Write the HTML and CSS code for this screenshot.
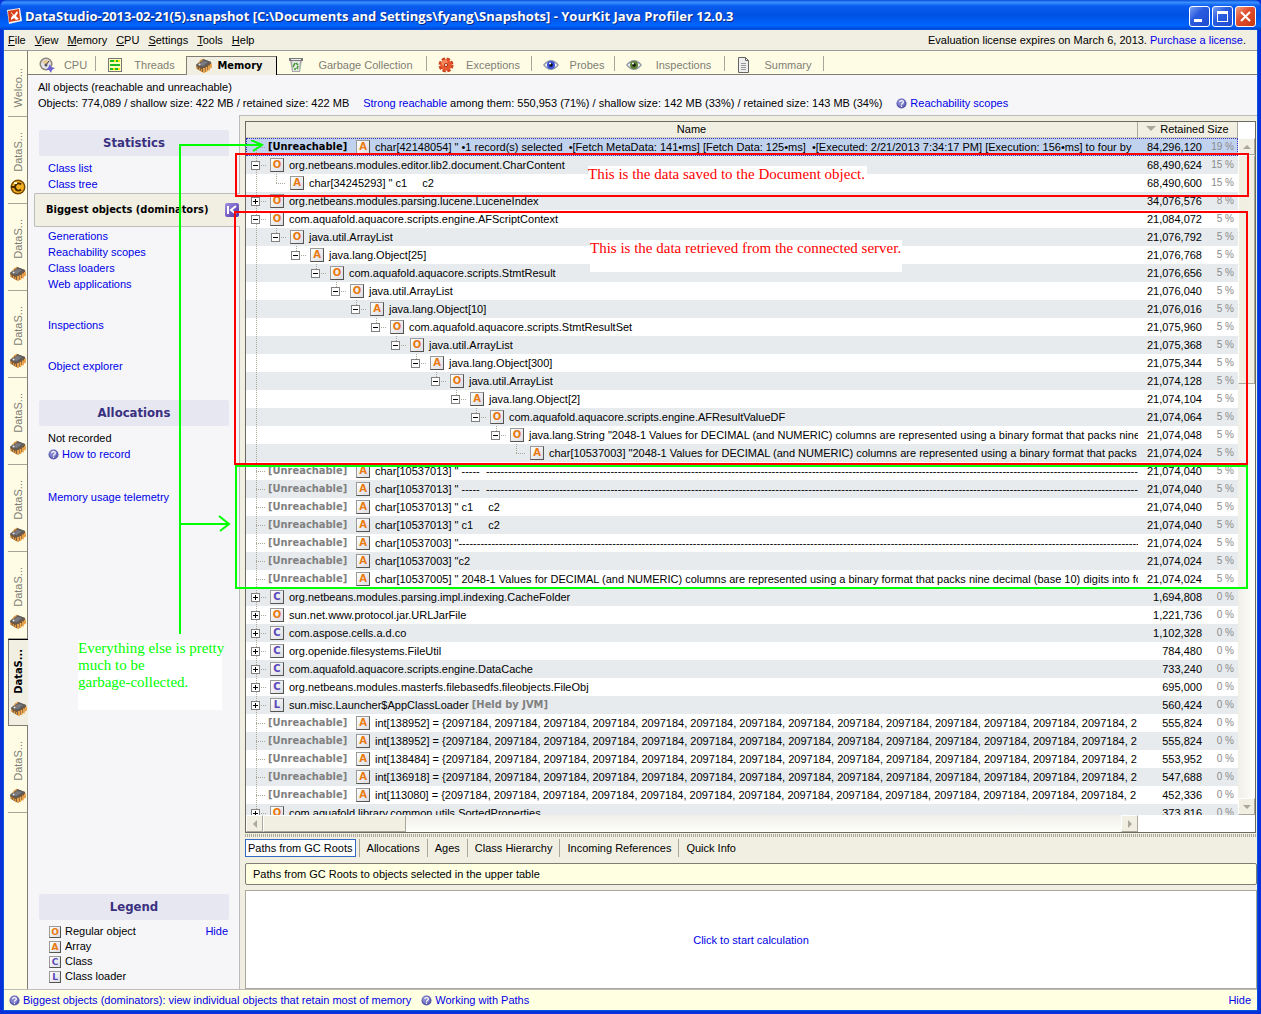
FILE: index.html
```html
<!doctype html>
<html lang="en">
<head>
    <title>YourKit Java Profiler</title>
    <meta charset="utf-8">
    <link rel="stylesheet" href="styles.css">
</head>
<body>
    <!-- Icons used more than once -->
    <svg class="defs">
        <symbol id="chip" viewBox="0 0 16 16">
            <path d="M0 7 7 1l8 3 1 5-8 6-7-4z" fill="#7a5a38"/>
            <path d="M0 7 7 1l8 3-8 6z" fill="#5c5c5e"/>
            <path d="M2 7l5-4 5 1-5 4z" fill="#7c7c80"/>
            <circle cx="3.500" cy="6.500" r="1" fill="#e4e4e4"/>
            <path d="M8 10v5M10.500 9v5M13 7.500v5M15 6v4" stroke="#f8ae50" stroke-width="1.700"/>
            <path d="M3 5l2-3M5 3l2-2M1 9v2M3.500 10v2M5.500 11v3" stroke="#e09840" stroke-width="1.200"/>
        </symbol>
        <symbol id="help" viewBox="0 0 12 12">
            <circle cx="6" cy="6" r="5.500" fill="#5a5ab0"/>
            <circle cx="5.500" cy="5" r="4" fill="#8585cc"/>
            <path d="M4 4.500C4 2.300 8.200 2.300 8 4.600 7.900 5.800 6 5.800 6 7.300M6 8.400v1.400" fill="none" stroke="#fff" stroke-width="1.300"/>
        </symbol>
        <symbol id="eye" viewBox="0 0 16 12">
            <path d="M0 6Q8-4 16 6 8 16 0 6z" fill="#8d94a0"/>
            <path d="M1.500 6Q8-1 14.500 6 8 13 1.500 6z" fill="#f4f6fa"/>
            <circle cx="8" cy="6" r="4" fill="currentColor"/>
            <circle cx="8" cy="6" r="1.800" fill="#111"/>
            <circle cx="7" cy="4.500" r="1" fill="#fff"/>
        </symbol>
    </svg>

    <header class="titlebar">
        <svg class="logo" viewBox="0 0 16 16">
            <path d="M1 2 14 0l2 13-13 3z" fill="#f4f0ea"/>
            <path d="M2 3 13 1l1 11-11 2z" fill="#d8401c"/>
            <path d="M5 4l3 3 3-4 1 2-2 3 3 3-3 1-2-2-3 2 0-2 2-3-2-2z" fill="#fff"/>
        </svg>
        <h1 class="title">DataStudio-2013-02-21(5).snapshot [C:\Documents and Settings\fyang\Snapshots] - YourKit Java Profiler 12.0.3</h1>
        <button class="win" aria-label="Minimize"><svg viewBox="0 0 19 19"><path d="M4 12h8v3H4z" fill="#fff"/></svg></button>
        <button class="win" aria-label="Maximize"><svg viewBox="0 0 19 19"><path d="M4 4h11v11H4zM5 7v7h9V7z" fill="#fff" fill-rule="evenodd"/></svg></button>
        <button class="win close" aria-label="Close"><svg viewBox="0 0 19 19"><path d="M5 5l9 9M14 5l-9 9" stroke="#fff" stroke-width="2"/></svg></button>
    </header>

    <div class="window">
        <nav class="menu">
            <button><u>F</u>ile</button>
            <button><u>V</u>iew</button>
            <button><u>M</u>emory</button>
            <button><u>C</u>PU</button>
            <button><u>S</u>ettings</button>
            <button><u>T</u>ools</button>
            <button><u>H</u>elp</button>
            <p class="license">Evaluation license expires on March 6, 2013. <a href="#">Purchase a license</a>.</p>
        </nav>

        <div class="workspace">
            <!-- Open snapshots -->
            <nav class="snapshots">
                <button class="snap first"><span>Welco...</span></button>
                <button class="snap"><span>DataS...</span><svg viewBox="0 0 16 16"><circle cx="8" cy="8" r="7.500" fill="#7a4a00"/><circle cx="8" cy="8" r="6" fill="#f4b020"/><path d="M11 5.500a3.500 3.500 0 1 0 0 5M1 8h4" fill="none" stroke="#4a2a00" stroke-width="2"/><path d="M4 4h3" stroke="#fff3c0" stroke-width="2"/></svg></button>
                <button class="snap"><span>DataS...</span><svg><use href="#chip"/></svg></button>
                <button class="snap"><span>DataS...</span><svg><use href="#chip"/></svg></button>
                <button class="snap"><span>DataS...</span><svg><use href="#chip"/></svg></button>
                <button class="snap"><span>DataS...</span><svg><use href="#chip"/></svg></button>
                <button class="snap"><span>DataS...</span><svg><use href="#chip"/></svg></button>
                <button class="snap current"><span>DataS...</span><svg><use href="#chip"/></svg></button>
                <button class="snap"><span>DataS...</span><svg><use href="#chip"/></svg></button>
            </nav>

            <div class="snapshot">
                <nav class="tabs">
                    <button class="tab cpu"><svg viewBox="0 0 16 16"><circle cx="7" cy="7" r="6.500" fill="#8a8478"/><circle cx="7" cy="7" r="5" fill="#e4e4ec"/><path d="M3 5a5 5 0 0 1 8 0l-4 3z" fill="#e8c890"/><path d="M7 8l3-4" stroke="#444"/><circle cx="7" cy="8" r="1.500" fill="#555"/><path d="M11 7l1 3 4 1-3 2-1 3-2-3-3 0 2-2z" fill="#6a62d0"/></svg><span>CPU</span></button>
                    <button class="tab threads"><svg viewBox="0 0 16 16"><path d="M1 1h14v14H1z" fill="#777"/><path d="M2 2h12v12H2z" fill="#ffffc0"/><path d="M3 3h10v2H3zM3 11h10v2H3z" fill="#f0e800"/><path d="M3 3h4v2H3zM9 3h2v2H9zM3 11h3v2H3zM8 11h3v2H8zM3 7h10v2H3z" fill="#20b820"/></svg><span>Threads</span></button>
                    <button class="tab memory current"><svg><use href="#chip"/></svg><span>Memory</span></button>
                    <button class="tab garbage"><svg viewBox="0 0 16 16"><path d="M2 3h12l-2 12H4z" fill="#a8aaa8"/><path d="M4 4h8l-1 10H5z" fill="#e4e6e4"/><path d="M1 1h14v3H1z" fill="#777"/><path d="M3 2h10v1H3z" fill="#eee"/><path d="M8 6l2 2M10 9l-1 3M8 12H6M5 10l2-4" stroke="#3a9a28" stroke-width="1.500"/></svg><span>Garbage Collection</span></button>
                    <button class="tab exceptions"><svg viewBox="0 0 16 16"><circle cx="8" cy="8" r="6" fill="none" stroke="#c84018" stroke-width="3" stroke-dasharray="3.200 1.500"/><circle cx="8" cy="8" r="5.800" fill="#e85830"/><circle cx="6.500" cy="6" r="3" fill="#f88a60"/><circle cx="8" cy="8" r="1.600" fill="#e8e4d8" stroke="#b03010"/></svg><span>Exceptions</span></button>
                    <button class="tab probes"><svg><use href="#eye"/></svg><span>Probes</span></button>
                    <button class="tab inspections"><svg><use href="#eye"/></svg><span>Inspections</span></button>
                    <button class="tab summary"><svg viewBox="0 0 16 16"><path d="M2.500 .5h7l3 3v12h-10z" fill="#eee" stroke="#666"/><path d="M9.500 .5v3h3" fill="none" stroke="#666"/><path d="M5 6.500h5M5 8.500h5M5 10.500h5M5 12.500h5" stroke="#999"/></svg><span>Summary</span></button>
                </nav>

                <div class="info">
                    <p>All objects (reachable and unreachable)</p>
                    <div class="info-line">
                        <p>Objects: 774,089 / shallow size: 422 MB / retained size: 422 MB</p>
                        <p><a href="#">Strong reachable</a> among them: 550,953 (71%) / shallow size: 142 MB (33%) / retained size: 143 MB (34%)</p>
                        <a class="helplink" href="#"><svg><use href="#help"/></svg>Reachability scopes</a>
                    </div>
                </div>

                <div class="panes">
                    <aside class="sidebar">
                        <h2>Statistics</h2>
                        <ul>
                            <li><a href="#">Class list</a></li>
                            <li><a href="#">Class tree</a></li>
                        </ul>
                        <div class="selected">Biggest objects (dominators)
                            <button aria-label="Collapse"><svg viewBox="0 0 14 14"><path d="M3 3v8M11 3 6 7l5 4M6 7h1" fill="none" stroke="#fff" stroke-width="2"/></svg></button>
                        </div>
                        <ul>
                            <li><a href="#">Generations</a></li>
                            <li><a href="#">Reachability scopes</a></li>
                            <li><a href="#">Class loaders</a></li>
                            <li><a href="#">Web applications</a></li>
                            <li class="apart"><a href="#">Inspections</a></li>
                            <li class="apart"><a href="#">Object explorer</a></li>
                        </ul>
                        <h2 class="allocations">Allocations</h2>
                        <ul>
                            <li>Not recorded</li>
                            <li><a class="helplink" href="#"><svg><use href="#help"/></svg>How to record</a></li>
                            <li class="apart"><a href="#">Memory usage telemetry</a></li>
                        </ul>
                        <h2 class="legend-title">Legend</h2>
                        <div class="legend">
                            <ul>
                                <li><i class="kind">O</i>Regular object</li>
                                <li><i class="kind">A</i>Array</li>
                                <li><i class="kind class">C</i>Class</li>
                                <li><i class="kind class">L</i>Class loader</li>
                            </ul>
                            <a href="#">Hide</a>
                        </div>
                    </aside>

                    <main class="main">
                        <div class="grid">
                            <div class="rows">
                                <table>
                                    <colgroup><col><col class="col-size"><col class="col-share"></colgroup>
                                    <thead>
                                        <tr><th>Name</th><th colspan="2"><span class="sort"></span>Retained Size</th></tr>
                                    </thead>
                                    <tbody>
                                        <tr class="picked"><td><div class="node gone"><b>[Unreachable]</b><i class="kind">A</i>char[42148054] " •1 record(s) selected  •[Fetch MetaData: 141•ms] [Fetch Data: 125•ms]  •[Executed: 2/21/2013 7:34:17 PM] [Execution: 156•ms] to four by</div></td><td>84,296,120</td><td>19 %</td></tr>
                                        <tr><td><div class="node"><button class="minus" aria-label="Collapse"></button><i class="kind">O</i>org.netbeans.modules.editor.lib2.document.CharContent</div></td><td>68,490,624</td><td>15 %</td></tr>
                                        <tr><td><div class="node leaf d1"><i class="kind">A</i>char[34245293] " c1     c2</div></td><td>68,490,600</td><td>15 %</td></tr>
                                        <tr><td><div class="node"><button class="plus" aria-label="Expand"></button><i class="kind">O</i>org.netbeans.modules.parsing.lucene.LuceneIndex</div></td><td>34,076,576</td><td>8 %</td></tr>
                                        <tr><td><div class="node"><button class="minus" aria-label="Collapse"></button><i class="kind">O</i>com.aquafold.aquacore.scripts.engine.AFScriptContext</div></td><td>21,084,072</td><td>5 %</td></tr>
                                        <tr><td><div class="node d1"><button class="minus" aria-label="Collapse"></button><i class="kind">O</i>java.util.ArrayList</div></td><td>21,076,792</td><td>5 %</td></tr>
                                        <tr><td><div class="node d2"><button class="minus" aria-label="Collapse"></button><i class="kind">A</i>java.lang.Object[25]</div></td><td>21,076,768</td><td>5 %</td></tr>
                                        <tr><td><div class="node d3"><button class="minus" aria-label="Collapse"></button><i class="kind">O</i>com.aquafold.aquacore.scripts.StmtResult</div></td><td>21,076,656</td><td>5 %</td></tr>
                                        <tr><td><div class="node d4"><button class="minus" aria-label="Collapse"></button><i class="kind">O</i>java.util.ArrayList</div></td><td>21,076,040</td><td>5 %</td></tr>
                                        <tr><td><div class="node d5"><button class="minus" aria-label="Collapse"></button><i class="kind">A</i>java.lang.Object[10]</div></td><td>21,076,016</td><td>5 %</td></tr>
                                        <tr><td><div class="node d6"><button class="minus" aria-label="Collapse"></button><i class="kind">O</i>com.aquafold.aquacore.scripts.StmtResultSet</div></td><td>21,075,960</td><td>5 %</td></tr>
                                        <tr><td><div class="node d7"><button class="minus" aria-label="Collapse"></button><i class="kind">O</i>java.util.ArrayList</div></td><td>21,075,368</td><td>5 %</td></tr>
                                        <tr><td><div class="node d8"><button class="minus" aria-label="Collapse"></button><i class="kind">A</i>java.lang.Object[300]</div></td><td>21,075,344</td><td>5 %</td></tr>
                                        <tr><td><div class="node d9"><button class="minus" aria-label="Collapse"></button><i class="kind">O</i>java.util.ArrayList</div></td><td>21,074,128</td><td>5 %</td></tr>
                                        <tr><td><div class="node d10"><button class="minus" aria-label="Collapse"></button><i class="kind">A</i>java.lang.Object[2]</div></td><td>21,074,104</td><td>5 %</td></tr>
                                        <tr><td><div class="node d11"><button class="minus" aria-label="Collapse"></button><i class="kind">O</i>com.aquafold.aquacore.scripts.engine.AFResultValueDF</div></td><td>21,074,064</td><td>5 %</td></tr>
                                        <tr><td><div class="node d12"><button class="minus" aria-label="Collapse"></button><i class="kind">O</i>java.lang.String "2048-1 Values for DECIMAL (and NUMERIC) columns are represented using a binary format that packs nine de</div></td><td>21,074,048</td><td>5 %</td></tr>
                                        <tr><td><div class="node leaf d13"><i class="kind">A</i>char[10537003] "2048-1 Values for DECIMAL (and NUMERIC) columns are represented using a binary format that packs nin</div></td><td>21,074,024</td><td>5 %</td></tr>
                                        <tr><td><div class="node gone"><b>[Unreachable]</b><i class="kind">A</i>char[10537013] " -----  ----------------------------------------------------------------------------------------------------------------------------------------------------------------------------------</div></td><td>21,074,040</td><td>5 %</td></tr>
                                        <tr><td><div class="node gone"><b>[Unreachable]</b><i class="kind">A</i>char[10537013] " -----  ----------------------------------------------------------------------------------------------------------------------------------------------------------------------------------</div></td><td>21,074,040</td><td>5 %</td></tr>
                                        <tr><td><div class="node gone"><b>[Unreachable]</b><i class="kind">A</i>char[10537013] " c1     c2</div></td><td>21,074,040</td><td>5 %</td></tr>
                                        <tr><td><div class="node gone"><b>[Unreachable]</b><i class="kind">A</i>char[10537013] " c1     c2</div></td><td>21,074,040</td><td>5 %</td></tr>
                                        <tr><td><div class="node gone"><b>[Unreachable]</b><i class="kind">A</i>char[10537003] "------------------------------------------------------------------------------------------------------------------------------------------------------------------------------------------</div></td><td>21,074,024</td><td>5 %</td></tr>
                                        <tr><td><div class="node gone"><b>[Unreachable]</b><i class="kind">A</i>char[10537003] "c2</div></td><td>21,074,024</td><td>5 %</td></tr>
                                        <tr><td><div class="node gone"><b>[Unreachable]</b><i class="kind">A</i>char[10537005] " 2048-1 Values for DECIMAL (and NUMERIC) columns are represented using a binary format that packs nine decimal (base 10) digits into four</div></td><td>21,074,024</td><td>5 %</td></tr>
                                        <tr><td><div class="node"><button class="plus" aria-label="Expand"></button><i class="kind class">C</i>org.netbeans.modules.parsing.impl.indexing.CacheFolder</div></td><td>1,694,808</td><td>0 %</td></tr>
                                        <tr><td><div class="node"><button class="plus" aria-label="Expand"></button><i class="kind">O</i>sun.net.www.protocol.jar.URLJarFile</div></td><td>1,221,736</td><td>0 %</td></tr>
                                        <tr><td><div class="node"><button class="plus" aria-label="Expand"></button><i class="kind class">C</i>com.aspose.cells.a.d.co</div></td><td>1,102,328</td><td>0 %</td></tr>
                                        <tr><td><div class="node"><button class="plus" aria-label="Expand"></button><i class="kind class">C</i>org.openide.filesystems.FileUtil</div></td><td>784,480</td><td>0 %</td></tr>
                                        <tr><td><div class="node"><button class="plus" aria-label="Expand"></button><i class="kind class">C</i>com.aquafold.aquacore.scripts.engine.DataCache</div></td><td>733,240</td><td>0 %</td></tr>
                                        <tr><td><div class="node"><button class="plus" aria-label="Expand"></button><i class="kind class">C</i>org.netbeans.modules.masterfs.filebasedfs.fileobjects.FileObj</div></td><td>695,000</td><td>0 %</td></tr>
                                        <tr><td><div class="node"><button class="plus" aria-label="Expand"></button><i class="kind class">L</i>sun.misc.Launcher$AppClassLoader <em>[Held by JVM]</em></div></td><td>560,424</td><td>0 %</td></tr>
                                        <tr><td><div class="node gone"><b>[Unreachable]</b><i class="kind">A</i>int[138952] = {2097184, 2097184, 2097184, 2097184, 2097184, 2097184, 2097184, 2097184, 2097184, 2097184, 2097184, 2097184, 2097184, 2097184, 2</div></td><td>555,824</td><td>0 %</td></tr>
                                        <tr><td><div class="node gone"><b>[Unreachable]</b><i class="kind">A</i>int[138952] = {2097184, 2097184, 2097184, 2097184, 2097184, 2097184, 2097184, 2097184, 2097184, 2097184, 2097184, 2097184, 2097184, 2097184, 2</div></td><td>555,824</td><td>0 %</td></tr>
                                        <tr><td><div class="node gone"><b>[Unreachable]</b><i class="kind">A</i>int[138484] = {2097184, 2097184, 2097184, 2097184, 2097184, 2097184, 2097184, 2097184, 2097184, 2097184, 2097184, 2097184, 2097184, 2097184, 2</div></td><td>553,952</td><td>0 %</td></tr>
                                        <tr><td><div class="node gone"><b>[Unreachable]</b><i class="kind">A</i>int[136918] = {2097184, 2097184, 2097184, 2097184, 2097184, 2097184, 2097184, 2097184, 2097184, 2097184, 2097184, 2097184, 2097184, 2097184, 2</div></td><td>547,688</td><td>0 %</td></tr>
                                        <tr><td><div class="node gone"><b>[Unreachable]</b><i class="kind">A</i>int[113080] = {2097184, 2097184, 2097184, 2097184, 2097184, 2097184, 2097184, 2097184, 2097184, 2097184, 2097184, 2097184, 2097184, 2097184, 2</div></td><td>452,336</td><td>0 %</td></tr>
                                        <tr><td><div class="node"><button class="plus" aria-label="Expand"></button><i class="kind">O</i>com.aquafold.library.common.utils.SortedProperties</div></td><td>373,816</td><td>0 %</td></tr>
                                    </tbody>
                                </table>
                            </div>
                            <div class="vscroll">
                                <button class="up" aria-label="Scroll up"></button>
                                <div class="thumb"></div>
                                <button class="down" aria-label="Scroll down"></button>
                            </div>
                            <div class="hscroll">
                                <button class="left" aria-label="Scroll left"></button>
                                <div class="thumb"></div>
                                <button class="right" aria-label="Scroll right"></button>
                            </div>
                        </div>
                        <div class="splitter"></div>
                        <nav class="details">
                            <button class="current">Paths from GC Roots</button>
                            <button>Allocations</button>
                            <button>Ages</button>
                            <button>Class Hierarchy</button>
                            <button>Incoming References</button>
                            <button>Quick Info</button>
                        </nav>
                        <p class="message">Paths from GC Roots to objects selected in the upper table</p>
                        <div class="paths"><a href="#">Click to start calculation</a></div>
                    </main>
                </div>
            </div>
        </div>

        <footer class="status">
            <a class="helplink" href="#"><svg><use href="#help"/></svg>Biggest objects (dominators): view individual objects that retain most of memory</a>
            <a class="helplink" href="#"><svg><use href="#help"/></svg>Working with Paths</a>
            <a class="hide" href="#">Hide</a>
        </footer>
    </div>

    <!-- Notes drawn over the window -->
    <div class="frame document"></div>
    <div class="frame server"></div>
    <div class="frame rest"></div>
    <p class="note document-note">This is the data saved to the Document object.</p>
    <p class="note server-note">This is the data retrieved from the connected server.</p>
    <svg class="arrows" viewBox="0 0 90 500">
        <path d="M2 494V5H83M73 0l11 5-9 6M2 384H51M41 376l10 8-9 7" fill="none" stroke="#0f0" stroke-width="2"/>
    </svg>
    <p class="note rest-note">Everything else is pretty<br>much to be<br>garbage-collected.</p>
</body>
</html>
```
FILE: styles.css
```css
* {
    box-sizing: border-box;
}
body {
    margin: 0;
    height: 100vh;
    display: flex;
    flex-direction: column;
    position: relative;
    overflow: hidden;
    background-color: #0831d9;
    color: black;
    font: 11px/16px "Liberation Sans", Arial, sans-serif;
}
h1, h2, p, ul {
    margin: 0;
    padding: 0;
}
ul {
    list-style: none;
}
a {
    color: #0000e6;
    text-decoration: none;
}
button {
    margin: 0;
    padding: 0;
    border: none;
    background: none;
    color: inherit;
    font: inherit;
}
svg {
    flex: none;
}
.defs {
    position: absolute;
    width: 0;
    height: 0;
}

/* Title bar */
.titlebar {
    flex: none;
    display: flex;
    align-items: center;
    gap: 2px;
    height: 30px;
    padding: 2px 5px 0 6px;
    border-radius: 7px 7px 0 0;
    background: linear-gradient(#0a4fd8, #3a90ff 8%, #0a5cf0 20%, #0052e4 50%, #0064ff 85%, #0040c8);
}
.logo {
    width: 16px;
    height: 16px;
}
.title {
    flex: 1;
    overflow: hidden;
    padding-left: 1px;
    color: white;
    font: bold 13px/20px "Open Sans", sans-serif;
    text-shadow: 1px 1px #0a2a80;
    white-space: nowrap;
}
.win {
    width: 21px;
    height: 21px;
    border: 1px solid white;
    border-radius: 3px;
    background: linear-gradient(135deg, #7ba0f0, #2a5ce0 40%, #1d4cd0);
}
.win svg {
    display: block;
}
.close {
    background: linear-gradient(135deg, #f0a080, #e05030 40%, #c83810);
}
.window {
    flex: 1;
    min-height: 0;
    display: flex;
    flex-direction: column;
    margin: 0 4px 4px;
    background-color: #f1efe2;
    box-shadow: 0 0 0 1px #0855dd;
}

/* Menu */
.menu {
    flex: none;
    display: flex;
    align-items: center;
    gap: 9px;
    height: 21px;
    padding: 0 11px 0 4px;
    border-bottom: 1px solid #9a9a98;
}
.license {
    margin-left: auto;
}
.workspace {
    flex: 1;
    min-height: 0;
    display: flex;
}

/* Snapshot tabs on the left edge */
.snapshots {
    width: 24px;
    flex: none;
    border-right: 1px solid #807e74;
    background-color: #fffce6;
}
.snap {
    display: flex;
    flex-direction: column;
    align-items: center;
    justify-content: flex-end;
    gap: 7px;
    width: 19px;
    height: 87px;
    margin-left: 4px;
    padding-bottom: 8px;
    border-bottom: 1px solid #a8a698;
    color: #807e74;
}
.snap.first {
    height: 66px;
}
.snap span {
    writing-mode: vertical-rl;
    transform: rotate(180deg);
}
.snap svg {
    width: 16px;
    height: 16px;
}
.snap.current {
    width: 20px;
    border: 1px solid #807e74;
    border-top-color: black;
    border-right: none;
    background-color: #f1efe2;
    color: black;
    font: bold 11px/16px "DejaVu Sans Condensed", sans-serif;
}
.snapshot {
    flex: 1;
    min-width: 0;
    display: flex;
    flex-direction: column;
    background-color: #f6f6f9;
}

/* Profiler tabs */
.tabs {
    flex: none;
    display: flex;
    align-items: flex-end;
    height: 24px;
    border-bottom: 1px solid #807e74;
    background-color: #fffce6;
}
.tab {
    display: flex;
    align-items: center;
    height: 19px;
    padding-left: 11px;
    background: linear-gradient(#a8a698, #a8a698) right 1px / 1px 15px no-repeat;
    color: #807e74;
}
.tab svg {
    width: 16px;
    height: 16px;
}
.tab span {
    flex: 1;
}
.cpu {
    width: 68px;
}
.threads {
    width: 90px;
    background: none;
}
.memory {
    width: 91px;
}
.garbage {
    width: 150px;
}
.exceptions {
    width: 105px;
}
.probes {
    width: 83px;
}
.probes svg {
    color: #3a50d8;
}
.inspections {
    width: 110px;
}
.inspections svg {
    color: #5a8030;
}
.summary {
    width: 99px;
}
.tab.current {
    margin-bottom: -1px;
    padding: 0 8px 0 9px;
    border: 1px solid #807e74;
    border-right-color: black;
    border-bottom: none;
    background: #f1efe2;
    color: black;
    font: bold 11px/16px "DejaVu Sans Condensed", sans-serif;
}

/* Totals */
.info {
    flex: none;
    height: 40px;
    padding: 4px 10px 0;
}
.info-line {
    display: flex;
    gap: 14px;
}
.info p {
    white-space: nowrap;
}
.helplink {
    display: inline-flex;
    align-items: center;
    gap: 3px;
}
.helplink svg {
    width: 11px;
    height: 11px;
}
.panes {
    flex: 1;
    min-height: 0;
    display: flex;
}

/* Sidebar */
.sidebar {
    width: 212px;
    flex: none;
    display: flex;
    flex-direction: column;
    padding: 15px 0 5px 11px;
    border-right: 1px solid #bcbcbc;
}
.sidebar h2 {
    width: 190px;
    height: 26px;
    border-radius: 2px;
    background-color: #e7e7f1;
    color: #3a3080;
    font: bold 13px/26px "DejaVu Sans Condensed", sans-serif;
    text-align: center;
}
.sidebar ul {
    padding: 4px 0 0 9px;
}
.selected {
    flex: none;
    display: flex;
    align-items: center;
    justify-content: space-between;
    height: 34px;
    margin: 1px -1px 0 -5px;
    padding: 0 1px 0 11px;
    border: 1px solid #bcbcbc;
    border-right: none;
    border-radius: 2px 0 0 2px;
    background-color: #f1efe2;
    font: bold 11px/16px "DejaVu Sans Condensed", sans-serif;
}
.selected button {
    width: 14px;
    height: 14px;
    border-radius: 2px;
    background: linear-gradient(135deg, #a090e0, #5030a8);
}
.selected svg {
    display: block;
}
.selected + ul {
    padding-top: 1px;
}
.sidebar .apart {
    margin-top: 25px;
}
.sidebar .allocations {
    margin-top: 26px;
}
.sidebar .legend-title {
    margin-top: auto;
}
.legend {
    display: flex;
    justify-content: space-between;
    padding: 4px 11px 0 0;
    line-height: 15px;
}
.sidebar .legend ul {
    padding: 0 0 0 10px;
}
.legend li {
    display: flex;
    align-items: center;
    gap: 4px;
}

/* Letter in a box: object kind */
.kind {
    flex: none;
    width: 14px;
    height: 14px;
    border: 1px solid;
    border-color: #9a9a98 #55554f #55554f #9a9a98;
    background: linear-gradient(135deg, #ffffff, #dcdce4);
    color: #e87a10;
    font: bold 10px/12px "DejaVu Sans", sans-serif;
    text-align: center;
}
.kind.class {
    color: #5a48b8;
}
.legend .kind {
    width: 12px;
    height: 12px;
    font-size: 9px;
    line-height: 10px;
}

/* Object tree */
.main {
    flex: 1;
    min-width: 0;
    display: flex;
    flex-direction: column;
    padding: 5px 0 0 5px;
    border-top: 1px solid #bcbcbc;
    background-color: #f1efe2;
}
.grid {
    flex: 1;
    min-height: 0;
    display: grid;
    grid-template: minmax(0, 1fr) 17px / minmax(0, 1fr) 17px;
    margin-right: 1px;
    border: 1px solid #6a6a60;
    background-color: white;
}
.rows {
    overflow: hidden;
}
table {
    width: 100%;
    table-layout: fixed;
    border-spacing: 0;
}
.col-size {
    width: 64px;
}
.col-share {
    width: 36px;
}
th {
    height: 16px;
    padding: 0;
    border-right: 1px solid #aca899;
    border-bottom: 1px solid #d0cdbb;
    background-color: #f1efe2;
    font-weight: normal;
    line-height: 15px;
}
.sort {
    display: inline-block;
    margin: 0 4px 2px 0;
    border: 5px solid transparent;
    border-top-color: #aca899;
    border-bottom: none;
}
td {
    height: 18px;
    padding: 0;
    text-align: right;
    white-space: pre;
}
td:first-child {
    overflow: hidden;
    background: repeating-linear-gradient(#aca899 0 1px, transparent 1px 2px) 10px 0 / 1px 18px no-repeat;
    text-align: left;
}
td:last-child {
    padding-right: 4px;
    color: #8a8a8a;
    font-size: 10px;
}
tbody tr:nth-child(even) {
    background-color: #e7ebee;
}
tbody .picked {
    background-color: #c1d2ee;
    outline: 1px dotted #3a30c0;
    outline-offset: -1px;
}
.picked td:first-child {
    background-position: 10px 10px;
}
.node {
    --indent: 0px;
    display: flex;
    align-items: center;
    height: 18px;
    overflow: hidden;
    padding-left: calc(5px + var(--indent));
    background:
        repeating-linear-gradient(#aca899 0 1px, transparent 1px 2px) calc(10px + var(--indent)) 0 / 1px 5px no-repeat,
        repeating-linear-gradient(90deg, #aca899 0 1px, transparent 1px 2px) calc(15px + var(--indent)) 9px / 6px 1px no-repeat;
}
.node.leaf {
    padding-left: calc(24px + var(--indent));
    background:
        repeating-linear-gradient(#aca899 0 1px, transparent 1px 2px) calc(10px + var(--indent)) 0 / 1px 9px no-repeat,
        repeating-linear-gradient(90deg, #aca899 0 1px, transparent 1px 2px) calc(10px + var(--indent)) 9px / 10px 1px no-repeat;
}
.node.gone {
    padding-left: 22px;
    background: repeating-linear-gradient(90deg, #aca899 0 1px, transparent 1px 2px) 10px 9px / 10px 1px no-repeat;
}
.node .kind {
    margin-right: 5px;
}
.d1 { --indent: 20px; }
.d2 { --indent: 40px; }
.d3 { --indent: 60px; }
.d4 { --indent: 80px; }
.d5 { --indent: 100px; }
.d6 { --indent: 120px; }
.d7 { --indent: 140px; }
.d8 { --indent: 160px; }
.d9 { --indent: 180px; }
.d10 { --indent: 200px; }
.d11 { --indent: 220px; }
.d12 { --indent: 240px; }
.d13 { --indent: 260px; }
.node b, .node em {
    flex: none;
    color: #808080;
    font: bold 11px/16px "DejaVu Sans Condensed", sans-serif;
}
.node b {
    width: 88px;
}
.picked .node b {
    color: black;
}
.minus, .plus {
    flex: none;
    width: 9px;
    height: 9px;
    margin-right: 10px;
    border: 1px solid #808080;
    background: linear-gradient(black, black) center / 5px 1px no-repeat, white;
}
.plus {
    background: linear-gradient(black, black) center / 5px 1px no-repeat, linear-gradient(black, black) center / 1px 5px no-repeat, white;
}

/* Scrollbars */
.vscroll {
    display: flex;
    flex-direction: column;
    margin-top: 16px;
    background: linear-gradient(90deg, #f0efe8, #fefefb);
}
.hscroll {
    display: flex;
    margin-right: 100px;
    background: linear-gradient(#f0efe8, #fefefb);
}
.vscroll button, .hscroll button, .thumb {
    display: flex;
    align-items: center;
    justify-content: center;
    width: 17px;
    height: 17px;
    border: 1px solid;
    border-color: white #aca899 #aca899 white;
    background-color: #f1efe2;
}
.vscroll .thumb {
    height: 229px;
}
.hscroll .thumb {
    width: 143px;
}
.down {
    margin-top: auto;
}
.right {
    margin-left: auto;
}
.up::before, .down::before, .left::before, .right::before {
    content: "";
    border: 4px solid transparent;
}
.up::before {
    border-top: none;
    border-bottom-color: #aca899;
}
.down::before {
    border-bottom: none;
    border-top-color: #aca899;
}
.left::before {
    border-left: none;
    border-right-color: #aca899;
}
.right::before {
    border-right: none;
    border-left-color: #aca899;
}
.splitter {
    flex: none;
    height: 3px;
    margin: 1px 0 2px;
    background: repeating-linear-gradient(90deg, #aca899 0 1px, #f1efe2 1px 2px);
}

/* Details below the tree */
.details {
    flex: none;
    display: flex;
    height: 18px;
}
.details button {
    padding: 0 7px;
    border-left: 1px solid #aca899;
    white-space: nowrap;
}
.details .current {
    margin-right: 3px;
    padding: 0 2px;
    border: 1px solid #316ac5;
    background-color: white;
}
.message {
    flex: none;
    height: 22px;
    margin: 6px 0 5px;
    padding: 0 7px;
    border: 1px solid #807e74;
    border-radius: 2px;
    background-color: #ffffe1;
    line-height: 20px;
}
.paths {
    flex: none;
    display: flex;
    align-items: center;
    justify-content: center;
    height: 99px;
    border: 1px solid #aca899;
    background-color: white;
}
.status {
    flex: none;
    display: flex;
    align-items: center;
    gap: 10px;
    height: 21px;
    padding: 0 6px 0 5px;
    border-top: 1px solid #bcbcbc;
    background-color: #ffffe1;
}
.hide {
    margin-left: auto;
}

/* Notes */
.frame {
    position: absolute;
    border: 2px solid red;
}
.document {
    top: 153px;
    left: 235px;
    right: 12px;
    height: 44px;
}
.server {
    top: 211px;
    left: 234px;
    right: 13px;
    height: 254px;
}
.rest {
    top: 465px;
    left: 235px;
    right: 13px;
    height: 124px;
    border-color: #00ff00;
}
.note {
    position: absolute;
    background-color: white;
    color: red;
    font: 15px/17px "Liberation Serif", "Times New Roman", serif;
    white-space: nowrap;
}
.document-note {
    top: 166px;
    left: 588px;
    width: 279px;
    height: 22px;
}
.server-note {
    top: 240px;
    left: 590px;
    width: 312px;
    height: 32px;
}
.rest-note {
    top: 640px;
    left: 78px;
    width: 144px;
    height: 70px;
    color: #00ff00;
}
.arrows {
    position: absolute;
    top: 140px;
    left: 178px;
    width: 90px;
    height: 500px;
}
```
